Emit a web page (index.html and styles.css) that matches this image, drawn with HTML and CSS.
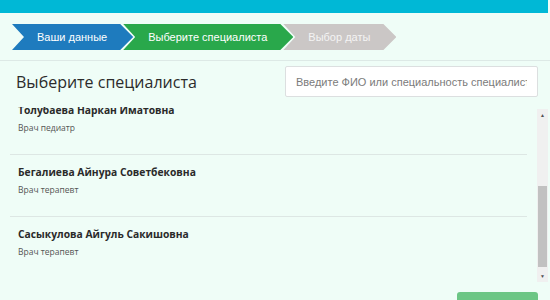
FILE: index.html
```html
<!doctype html>
<html>
  <head>
    <meta charset="utf-8">
    <title>Запись к врачу</title>
    <meta name="viewport" content="width=device-width,initial-scale=1">
    <link rel="stylesheet" href="styles.css">
  </head>
  <body>
    <header class="topbar"></header>

    <nav class="steps">
      <div class="step step-done">Ваши данные</div>
      <div class="step step-active">Выберите специалиста</div>
      <div class="step step-next">Выбор даты</div>
    </nav>

    <main class="panel">
      <div class="panel-head">
        <h2 class="panel-title">Выберите специалиста</h2>
        <input class="search" type="text" placeholder="Введите ФИО или специальность специалиста">
      </div>

      <div class="list-wrap">
        <ul class="doctors" id="doctors">
          <li class="doctor">
            <div class="doctor-name">Абдыкадырова Гульнара Маратовна</div>
            <div class="doctor-role">Врач терапевт</div>
          </li>
          <li class="doctor">
            <div class="doctor-name">Асанова Чолпон Бакытовна</div>
            <div class="doctor-role">Врач невролог</div>
          </li>
          <li class="doctor">
            <div class="doctor-name">Толубаева Наркан Иматовна</div>
            <div class="doctor-role">Врач педиатр</div>
          </li>
          <li class="doctor">
            <div class="doctor-name">Бегалиева Айнура Советбековна</div>
            <div class="doctor-role">Врач терапевт</div>
          </li>
          <li class="doctor">
            <div class="doctor-name">Сасыкулова Айгуль Сакишовна</div>
            <div class="doctor-role">Врач терапевт</div>
          </li>
        </ul>
        <div class="scrollbar">
          <span class="scroll-btn">&#9650;</span>
          <div class="scroll-track"><div class="scroll-thumb"></div></div>
          <span class="scroll-btn">&#9660;</span>
        </div>
      </div>

      <div class="actions">
        <button class="next-btn" type="button">Далее</button>
      </div>
    </main>

    <script>
      // list is shown scrolled to the end
      var list = document.getElementById("doctors");
      list.scrollTop = list.scrollHeight;
    </script>
  </body>
</html>
```

FILE: styles.css
```css
body {
  margin: 0;
  background: #effdf7;
  font-family: "Liberation Sans", Arial, sans-serif;
}

.topbar {
  height: 13px;
  margin-right: 2px;
  background: #00b8d6;
}

/* wizard steps */
.steps {
  display: flex;
  margin: 11px 0 10px 12px;
}

.step {
  height: 26px;
  line-height: 26px;
  padding: 0 26px 0 25px;
  font-size: 11px;
  color: #ffffff;
  white-space: nowrap;
  clip-path: polygon(0 0, calc(100% - 13px) 0, 100% 50%, calc(100% - 13px) 100%, 0 100%, 12px 50%);
}

.step + .step {
  margin-left: -10px;
}

.step-done {
  background: #1e7bbe;
}

.step-active {
  background: #29a84b;
}

.step-next {
  background: #cbc7c6;
  color: #f4f4f4;
}

/* panel */
.panel {
  border-top: 1px solid #dde9e6;
}

.panel-head {
  display: flex;
  align-items: center;
  justify-content: space-between;
  padding: 5px 12px 0 16px;
}

.panel-title {
  margin: 0;
  font-family: "Open Sans", sans-serif;
  font-size: 16px;
  font-weight: normal;
  color: #2b2b2b;
}

.search {
  box-sizing: border-box;
  width: 253px;
  height: 31px;
  padding: 0 10px;
  border: 1px solid #dcdfe0;
  border-radius: 2px;
  background: #ffffff;
  font-family: "Liberation Sans", Arial, sans-serif;
  font-size: 11px;
}

.search::placeholder {
  color: #7b7b7b;
}

/* doctors list with its scrollbar */
.list-wrap {
  display: flex;
  height: 175px;
  margin: 10px 2px 0 10px;
}

.doctors {
  flex: 1;
  list-style: none;
  margin: 0;
  padding: 18px 0 3px;
  overflow: hidden;
}

.doctor {
  height: 62px;
  margin-right: 10px;
  padding: 10px 0 0 8px;
  box-sizing: border-box;
  border-bottom: 1px solid #dde7e4;
  font-family: "Open Sans", sans-serif;
}

.doctor:last-child {
  border-bottom: none;
}

.doctor-name {
  font-size: 10.3px;
  font-weight: bold;
  color: #2a2a2a;
}

.doctor-role {
  margin-top: 5px;
  font-size: 8.5px;
  color: #555555;
}

.scrollbar {
  display: flex;
  flex-direction: column;
  width: 11px;
  margin-top: 2px;
  background: #f0f0f0;
}

.scroll-btn {
  height: 12px;
  line-height: 12px;
  font-size: 5px;
  text-align: center;
  color: #505050;
}

.scroll-track {
  flex: 1;
  display: flex;
  flex-direction: column;
  justify-content: flex-end;
  padding: 0 1px 3px;
}

.scroll-thumb {
  height: 81px;
  background: #c1c1c1;
}

.actions {
  display: flex;
  justify-content: flex-end;
  padding: 10px 12px 0 0;
}

.next-btn {
  width: 81px;
  height: 34px;
  border: none;
  border-radius: 3px;
  background: #6cc685;
  color: #ffffff;
  font-size: 13px;
}
```
